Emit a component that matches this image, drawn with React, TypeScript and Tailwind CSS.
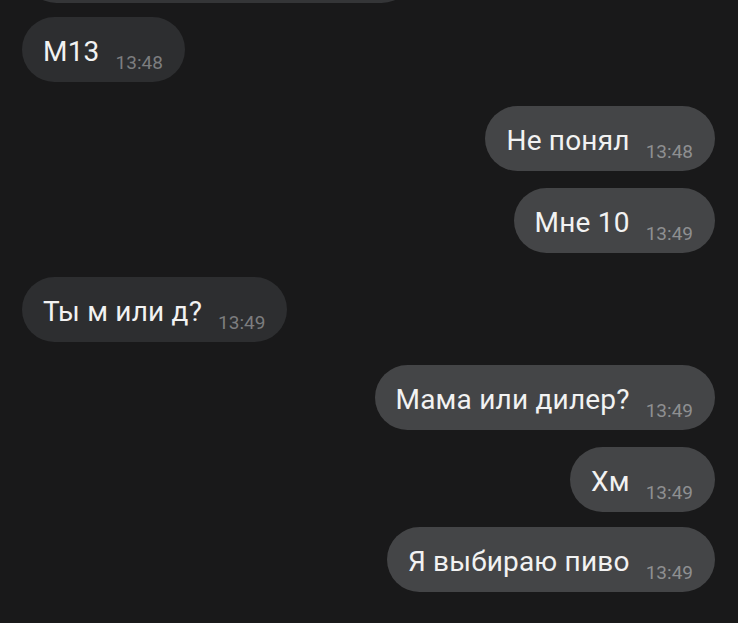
type Msg = { text: string; time: string; out: boolean; gap: string }

const messages: Msg[] = [
  { text: 'M13', time: '13:48', out: false, gap: 'mt-[14px]' },
  { text: 'Не понял', time: '13:48', out: true, gap: 'mt-[24px]' },
  { text: 'Мне 10', time: '13:49', out: true, gap: 'mt-[17px]' },
  { text: 'Ты м или д?', time: '13:49', out: false, gap: 'mt-[24px]' },
  { text: 'Мама или дилер?', time: '13:49', out: true, gap: 'mt-[23px]' },
  { text: 'Хм', time: '13:49', out: true, gap: 'mt-[17px]' },
  { text: 'Я выбираю пиво', time: '13:49', out: true, gap: 'mt-[15px]' },
]

function Bubble({ m }: { m: Msg }) {
  return (
    <div className={`flex ${m.out ? 'justify-end' : 'justify-start'} ${m.gap}`}>
      <div
        className={`flex h-[65px] items-end rounded-[33px] pl-[21px] pr-[22px] pt-[21px] pb-[9px] gap-[16px] ${
          m.out ? 'bg-[#444547]' : 'bg-[#2d2e30]'
        }`}
      >
        <span className="pb-[7px] text-[28px] leading-[28px] tracking-[0.2px] text-[#f2f2f2] whitespace-nowrap">
          {m.text}
        </span>
        <span
          className={`pb-[1px] text-[19px] leading-[19px] whitespace-nowrap ${
            m.out ? 'text-[#8e8f91]' : 'text-[#7c7d7f]'
          }`}
        >
          {m.time}
        </span>
      </div>
    </div>
  )
}

export default function App() {
  return (
    <div
      className="h-[623px] w-[738px] overflow-hidden bg-[#19191a] pl-[22px] pr-[23px]"
      style={{ fontFamily: 'Roboto, "Noto Sans", sans-serif' }}
    >
      <div className="-mt-[62px] ml-[2px] h-[65px] w-[390px] rounded-[33px] bg-[#343537]" />
      {messages.map((m, i) => (
        <Bubble key={i} m={m} />
      ))}
    </div>
  )
}
